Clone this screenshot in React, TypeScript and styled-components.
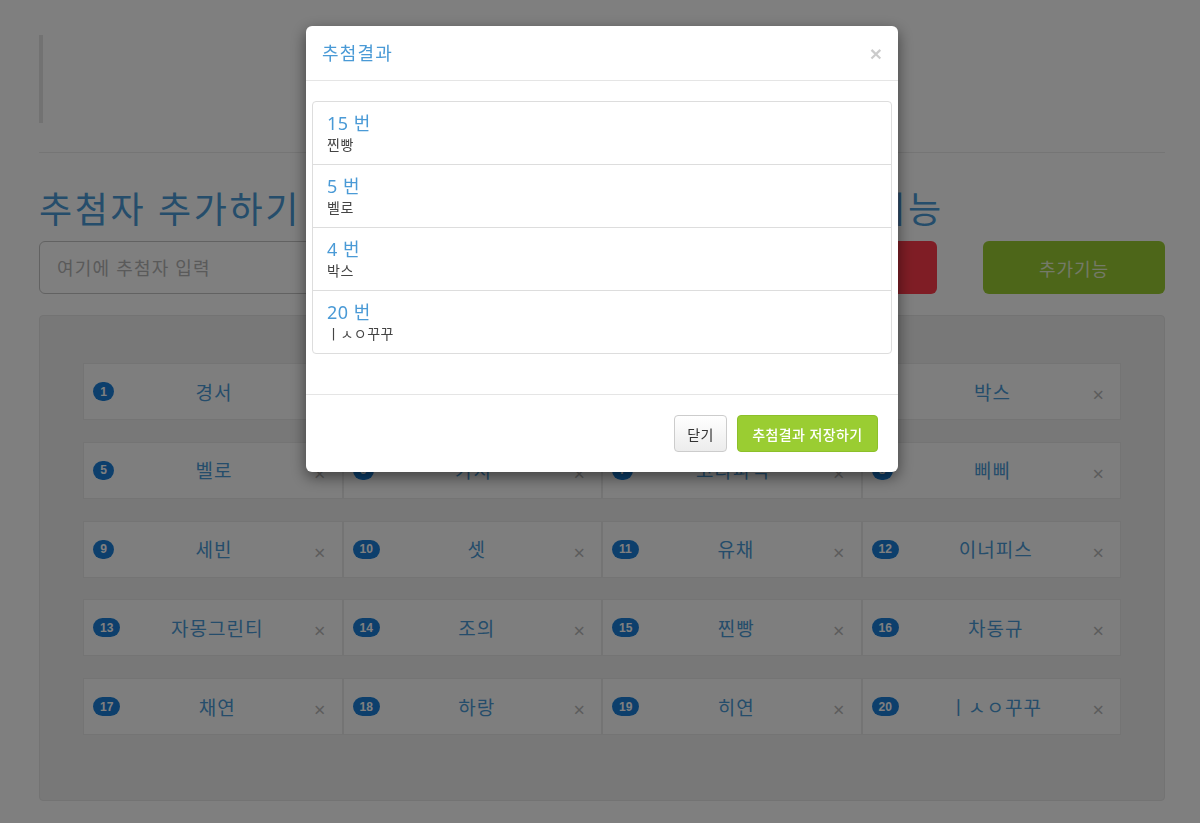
import styled, { createGlobalStyle } from 'styled-components'

const blue = '#4a9ad6'

const GlobalStyle = createGlobalStyle`
  html, body {
    margin: 0;
    padding: 0;
    background: #fff;
    font-family: "Noto Sans", "Noto Sans CJK KR", sans-serif;
    color: #333;
  }
  * { box-sizing: border-box; }
`

const people = [
  '경서', '민지', '하늘', '박스',
  '벨로', '카지', '고라파덕', '삐삐',
  '세빈', '셋', '유채', '이너피스',
  '자몽그린티', '조의', '찐빵', '차동규',
  '채연', '하랑', '히연', 'ㅣㅅㅇ꾸꾸',
]

const results = [
  { no: 15, name: '찐빵' },
  { no: 5, name: '벨로' },
  { no: 4, name: '박스' },
  { no: 20, name: 'ㅣㅅㅇ꾸꾸' },
]

export default function App() {
  return (
    <>
      <GlobalStyle />
      <Page>
        <Quote />
        <Rule />
        <Controls>
          <Col>
            <Title>추첨자 추가하기</Title>
            <NameInput placeholder="여기에 추첨자 입력" />
          </Col>
          <Col $width={148}>
            <Title>추첨 기능</Title>
            <ActionButton $color="#ff3b4b">추첨하기</ActionButton>
          </Col>
          <Col $width={182}>
            <Title>&nbsp;</Title>
            <ActionButton $color="#9acd32">추가기능</ActionButton>
          </Col>
        </Controls>
        <Well>
          <Grid>
            {people.map((name, i) => (
              <Card key={i}>
                <Badge>{i + 1}</Badge>
                <CardName>{name}</CardName>
                <Remove>×</Remove>
              </Card>
            ))}
          </Grid>
        </Well>
      </Page>

      <Backdrop>
        <Dialog>
          <DialogHeader>
            <DialogTitle>추첨결과</DialogTitle>
            <Close>×</Close>
          </DialogHeader>
          <DialogBody>
            <ResultList>
              {results.map((r) => (
                <ResultItem key={r.no}>
                  <ResultNo>{r.no} 번</ResultNo>
                  <ResultName>{r.name}</ResultName>
                </ResultItem>
              ))}
            </ResultList>
          </DialogBody>
          <DialogFooter>
            <FooterButton>닫기</FooterButton>
            <FooterButton $primary>추첨결과 저장하기</FooterButton>
          </DialogFooter>
        </Dialog>
      </Backdrop>
    </>
  )
}

const Page = styled.div`
  padding: 35px 35px 21px 39px;
`

const Quote = styled.div`
  height: 88px;
  border-left: 4px solid #e4e4e4;
`

const Rule = styled.hr`
  margin: 29px 0 0;
  border: 0;
  border-top: 1px solid #eaeaea;
`

const Controls = styled.div`
  display: flex;
  gap: 46px;
  margin-top: 37px;
`

const Col = styled.div<{ $width?: number }>`
  display: flex;
  flex-direction: column;
  ${(p) => (p.$width ? `width: ${p.$width}px; flex: none;` : 'flex: 1;')}
`

const Title = styled.h1`
  margin: 0 0 11px;
  font-size: 36px;
  font-weight: 400;
  line-height: 40px;
  letter-spacing: 2.6px;
  color: ${blue};
  white-space: nowrap;
`

const NameInput = styled.input`
  height: 53px;
  border: 1px solid #c4c4c4;
  border-radius: 6px;
  padding: 0 17px;
  font-size: 18px;
  font-family: inherit;
  letter-spacing: 1.2px;
  color: #555;
  &::placeholder { color: #b4b4b4; }
`

const ActionButton = styled.button<{ $color: string }>`
  height: 53px;
  border: 0;
  border-radius: 6px;
  background: ${(p) => p.$color};
  color: rgba(255, 255, 255, 0.78);
  font-size: 18px;
  letter-spacing: 1px;
  font-family: inherit;
`

const Well = styled.div`
  margin-top: 21px;
  background: #f0f0f0;
  border: 1px solid #e6e6e6;
  border-radius: 4px;
  padding: 47px 43px 65px;
`

const Grid = styled.div`
  display: grid;
  grid-template-columns: repeat(4, 1fr);
  row-gap: 21.75px;
`

const Card = styled.div`
  display: flex;
  align-items: center;
  height: 57px;
  padding: 0 16px 0 9px;
  background: #fdfdfd;
  border: 1px solid #e9e9e9;
`

const Badge = styled.span`
  display: inline-flex;
  align-items: center;
  justify-content: center;
  min-width: 21px;
  height: 19px;
  padding: 0 7px;
  border-radius: 10px;
  background: #1a7fd8;
  color: #fff;
  font-family: "Liberation Sans Narrow", "Liberation Sans", sans-serif;
  font-weight: 700;
  font-size: 12px;
`

const CardName = styled.span`
  flex: 1;
  text-align: center;
  font-size: 19px;
  letter-spacing: 1px;
  color: ${blue};
`

const Remove = styled.span`
  margin-top: 7px;
  font-size: 20px;
  line-height: 1;
  color: #b9b9b9;
`

const Backdrop = styled.div`
  position: fixed;
  inset: 0;
  background: rgba(0, 0, 0, 0.5);
  padding-left: 4px;
`

const Dialog = styled.div`
  width: 592px;
  margin: 26px auto 0;
  background: #fff;
  border-radius: 6px;
  box-shadow: 0 5px 15px rgba(0, 0, 0, 0.5);
`

const DialogHeader = styled.div`
  display: flex;
  align-items: center;
  justify-content: space-between;
  padding: 15px 16px;
  border-bottom: 1px solid #e5e5e5;
`

const DialogTitle = styled.h4`
  margin: 0;
  font-size: 18px;
  line-height: 24px;
  font-weight: 400;
  letter-spacing: 1.2px;
  color: ${blue};
`

const Close = styled.span`
  font-size: 21px;
  font-weight: 700;
  line-height: 1;
  color: #000;
  opacity: 0.2;
  font-family: "Liberation Sans", sans-serif;
`

const DialogBody = styled.div`
  padding: 20px 6px;
`

const ResultList = styled.div`
  border: 1px solid #dddddd;
  border-radius: 4px;
  margin-bottom: 20px;
`

const ResultItem = styled.div`
  padding: 9px 14px;
  & + & { border-top: 1px solid #dddddd; }
`

const ResultNo = styled.div`
  font-size: 18px;
  line-height: 24px;
  letter-spacing: 0.5px;
  color: ${blue};
`

const ResultName = styled.div`
  font-size: 14px;
  line-height: 20px;
  letter-spacing: 0.5px;
  color: #444;
`

const DialogFooter = styled.div`
  display: flex;
  justify-content: flex-end;
  gap: 10px;
  padding: 20px;
  border-top: 1px solid #e5e5e5;
`

const FooterButton = styled.button<{ $primary?: boolean }>`
  height: 37px;
  padding: 0 ${(p) => (p.$primary ? 14.5 : 12)}px;
  border-radius: 4px;
  font-size: 14px;
  font-family: inherit;
  letter-spacing: 0.4px;
  border: 1px solid ${(p) => (p.$primary ? '#8cc02a' : '#cccccc')};
  background: ${(p) => (p.$primary ? '#9acd32' : 'linear-gradient(#ffffff, #ececec)')};
  color: ${(p) => (p.$primary ? '#ffffff' : '#333333')};
  font-weight: ${(p) => (p.$primary ? 500 : 400)};
`
